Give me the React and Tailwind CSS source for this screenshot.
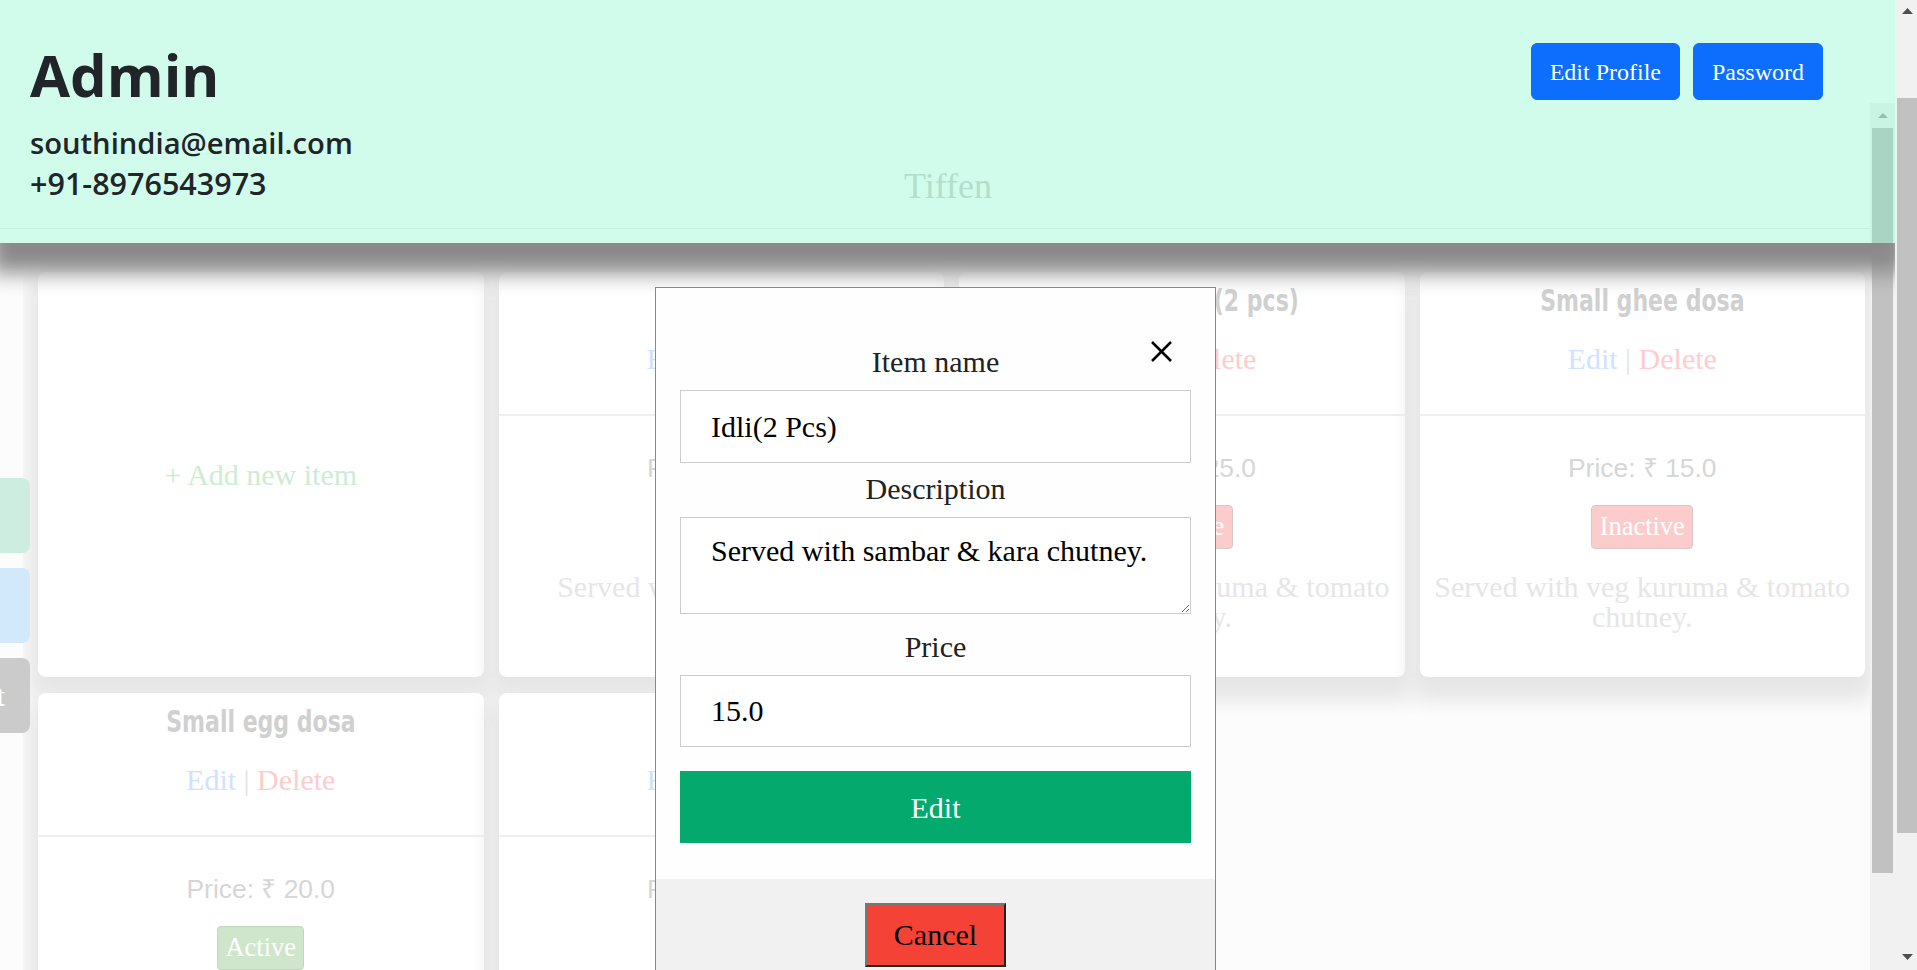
import React from "react";

// faded menu cards that sit behind the modal
const items = [
  { title: "Idli(2 Pcs)", price: "15.0", active: false, desc: "Served with sambar & kara chutney." },
  { title: "Sambar Idli (2 pcs)", price: "25.0", active: false, desc: "Served with veg kuruma & tomato chutney." },
  { title: "Small ghee dosa", price: "15.0", active: false, desc: "Served with veg kuruma & tomato chutney." },
  { title: "Small egg dosa", price: "20.0", active: true, desc: "Served with veg kuruma & tomato chutney." },
  { title: "Vada", price: "10.0", active: true, desc: "Served with sambar & coconut chutney." },
];

const Arrow = ({ down = false, color = "#505050", w = 11, h = 6 }) => (
  <svg width={w} height={h} viewBox={`0 0 ${w} ${h}`}>
    <polygon
      points={down ? `0,0 ${w},0 ${w / 2},${h}` : `0,${h} ${w / 2},0 ${w},${h}`}
      fill={color}
    />
  </svg>
);

const ItemCard = ({ title, price, active, desc }) => (
  <div className="h-[405px] rounded-[8px] bg-white shadow-[0_14px_20px_10px_#e6e6e6] flex flex-col overflow-hidden">
    <div className="h-[142px] shrink-0 flex flex-col items-center pt-[10px]">
      <h3 className="scale-x-[0.79] font-['DejaVu_Sans_Condensed',sans-serif] font-bold text-[31px] leading-[36px] text-[#d0d0d0] whitespace-nowrap">
        {title}
      </h3>
      <div className="mt-[24px] text-[30px] leading-[34px] whitespace-nowrap">
        <span className="text-[#cfe2ff]">Edit</span>
        <span className="text-[#e3e3e3]"> | </span>
        <span className="text-[#ffcccc]">Delete</span>
      </div>
    </div>
    <div className="h-[2px] shrink-0 bg-[#efefef]" />
    <div className="flex-1 flex flex-col items-center px-[12px] pt-[37px] text-center">
      <p className="font-['Liberation_Sans',sans-serif] text-[26.4px] leading-[30px] text-[#d6d6d6]">
        Price: ₹ {price}
      </p>
      {active ? (
        <span className="mt-[22px] h-[44px] px-[7.5px] flex items-center rounded-[4px] border border-[#c2d6c0] bg-[#cfe6cd] text-white text-[26.4px]">
          Active
        </span>
      ) : (
        <span className="mt-[22px] h-[44px] px-[7.5px] flex items-center rounded-[4px] border border-[#d9c7c7] bg-[#fccccc] text-white text-[26.4px]">
          Inactive
        </span>
      )}
      <p className="mt-[23px] text-[30px] leading-[30px] text-[#e6e6e6]">{desc}</p>
    </div>
  </div>
);

const AddCard = () => (
  <div className="h-[405px] rounded-[8px] bg-white shadow-[0_14px_20px_10px_#e6e6e6] flex items-center justify-center">
    <span className="text-[30px] text-[#cdecd3]">+ Add new item</span>
  </div>
);

export default function App() {
  return (
    <div className="w-[1917px] h-[970px] overflow-hidden flex bg-[#fcfcfc] font-['Liberation_Serif',serif]">
      {/* page column */}
      <div className="relative w-[1895px] h-full overflow-hidden flex flex-col">
        <div className="h-[103px] shrink-0" />

        {/* scrolling area */}
        <div className="flex flex-1 min-h-0">
          <div className="w-[1870px] flex flex-col">
            <div className="h-[126px] shrink-0 border-b border-[#e9e9e9] pt-[63px] pl-[26px] text-center">
              <h2 className="text-[36px] leading-[40px] text-[#d0d0d0]">Tiffen</h2>
            </div>

            <div className="flex flex-1">
              {/* side tabs */}
              <div className="relative z-10 w-[23px] shrink-0 bg-[#fcfcfc] flex flex-col gap-[15px] pt-[249px]">
                <div className="w-[30px] h-[75px] rounded-r-[8px] bg-[#ccede0]" />
                <div className="w-[30px] h-[75px] rounded-r-[8px] bg-[#d2e8fb]" />
                <div className="w-[30px] h-[75px] rounded-r-[8px] bg-[#cbcbcb] overflow-hidden flex items-center justify-end pr-[25px]">
                  <span className="text-white text-[30px] whitespace-nowrap">Logout</span>
                </div>
              </div>

              {/* cards */}
              <div className="flex-1 pl-[15px] pr-[5px] pt-[43px]">
                <div className="grid grid-cols-4 gap-x-[15px] gap-y-[16px]">
                  <AddCard />
                  {items.map((it) => (
                    <ItemCard key={it.title} {...it} />
                  ))}
                </div>
              </div>
            </div>
          </div>

          {/* inner scrollbar */}
          <div className="w-[25px] shrink-0 bg-[#f1f1f1] flex flex-col">
            <div className="h-[25px] flex items-center justify-center">
              <Arrow color="#a0a0a0" w={10} h={5} />
            </div>
            <div className="mx-[2px] h-[745px] bg-[#c1c1c1]" />
          </div>
        </div>

        {/* header */}
        <header className="absolute top-0 left-0 right-0 z-20 h-[243px] bg-[rgba(122,253,201,0.33)] shadow-[0_20px_20px_10px_#8a8a8a] flex justify-between pl-[30px] pr-[72px] pt-[40px] font-['Open_Sans',sans-serif] text-[#212529]">
          <div className="flex flex-col">
            <h1 className="text-[58px] leading-[70px] font-bold">Admin</h1>
            <p className="mt-[15px] text-[29.2px] leading-[36px] font-semibold">southindia@email.com</p>
            <p className="mt-[4px] text-[30.5px] leading-[36px] font-semibold">+91-8976543973</p>
          </div>
          <div className="flex items-start gap-[13px] pt-[3px] font-['Liberation_Serif',serif]">
            <button className="h-[57px] px-[18px] rounded-[6px] border border-[#0d6efd] bg-[#0d6efd] text-white text-[24px]">
              Edit Profile
            </button>
            <button className="h-[57px] px-[18px] rounded-[6px] border border-[#0d6efd] bg-[#0d6efd] text-white text-[24px]">
              Password
            </button>
          </div>
        </header>

        {/* edit item modal */}
        <div className="absolute top-0 left-0 z-30 w-[1871px] h-full flex justify-center pt-[287px]">
          <div className="relative w-[561px] h-fit border border-[#888] bg-[#fefefe]">
            <button className="absolute top-[53px] right-[43px] w-[21px] h-[21px]">
              <svg width="21" height="21" viewBox="0 0 21 21">
                <line x1="1" y1="1" x2="20" y2="20" stroke="#000" strokeWidth="2.5" />
                <line x1="20" y1="1" x2="1" y2="20" stroke="#000" strokeWidth="2.5" />
              </svg>
            </button>

            <div className="px-[24px] pt-[57px] pb-[36px] flex flex-col">
              <label className="text-center text-[30px] leading-[34px] text-[#222]">Item name</label>
              <input
                defaultValue="Idli(2 Pcs)"
                className="mt-[11px] h-[73px] w-full border border-[#ccc] bg-white px-[30px] text-[30px] text-black outline-none"
              />
              <label className="mt-[9px] text-center text-[30px] leading-[34px] text-[#222]">Description</label>
              <textarea
                defaultValue="Served with sambar & kara chutney."
                className="mt-[11px] block h-[97px] w-full border border-[#ccc] bg-white px-[30px] pt-[16px] text-[30px] leading-[34px] text-black outline-none"
              />
              <label className="mt-[16px] text-center text-[30px] leading-[34px] text-[#222]">Price</label>
              <input
                defaultValue="15.0"
                className="mt-[11px] h-[72px] w-full border border-[#ccc] bg-white px-[30px] text-[30px] text-black outline-none"
              />
              <button className="mt-[24px] h-[72px] w-full bg-[#04aa6d] text-white text-[30px]">Edit</button>
            </div>

            <div className="bg-[#f1f1f1] pt-[24px] pb-[20px] flex justify-center">
              <button className="h-[64px] px-[27px] bg-[#f44336] border-2 border-t-[#767676] border-l-[#767676] border-r-[#222] border-b-[#222] text-[30px] leading-[34px] text-black">
                Cancel
              </button>
            </div>
          </div>
        </div>
      </div>

      {/* window scrollbar */}
      <div className="w-[22px] h-full bg-[#f1f1f1] flex flex-col">
        <div className="h-[22px] flex items-center justify-center pl-[2px]">
          <Arrow />
        </div>
        <div className="mt-[76px] ml-[2px] h-[735px] bg-[#c1c1c1]" />
        <div className="flex-1" />
        <div className="h-[26px] flex items-center justify-center pl-[2px]">
          <Arrow down />
        </div>
      </div>
    </div>
  );
}
